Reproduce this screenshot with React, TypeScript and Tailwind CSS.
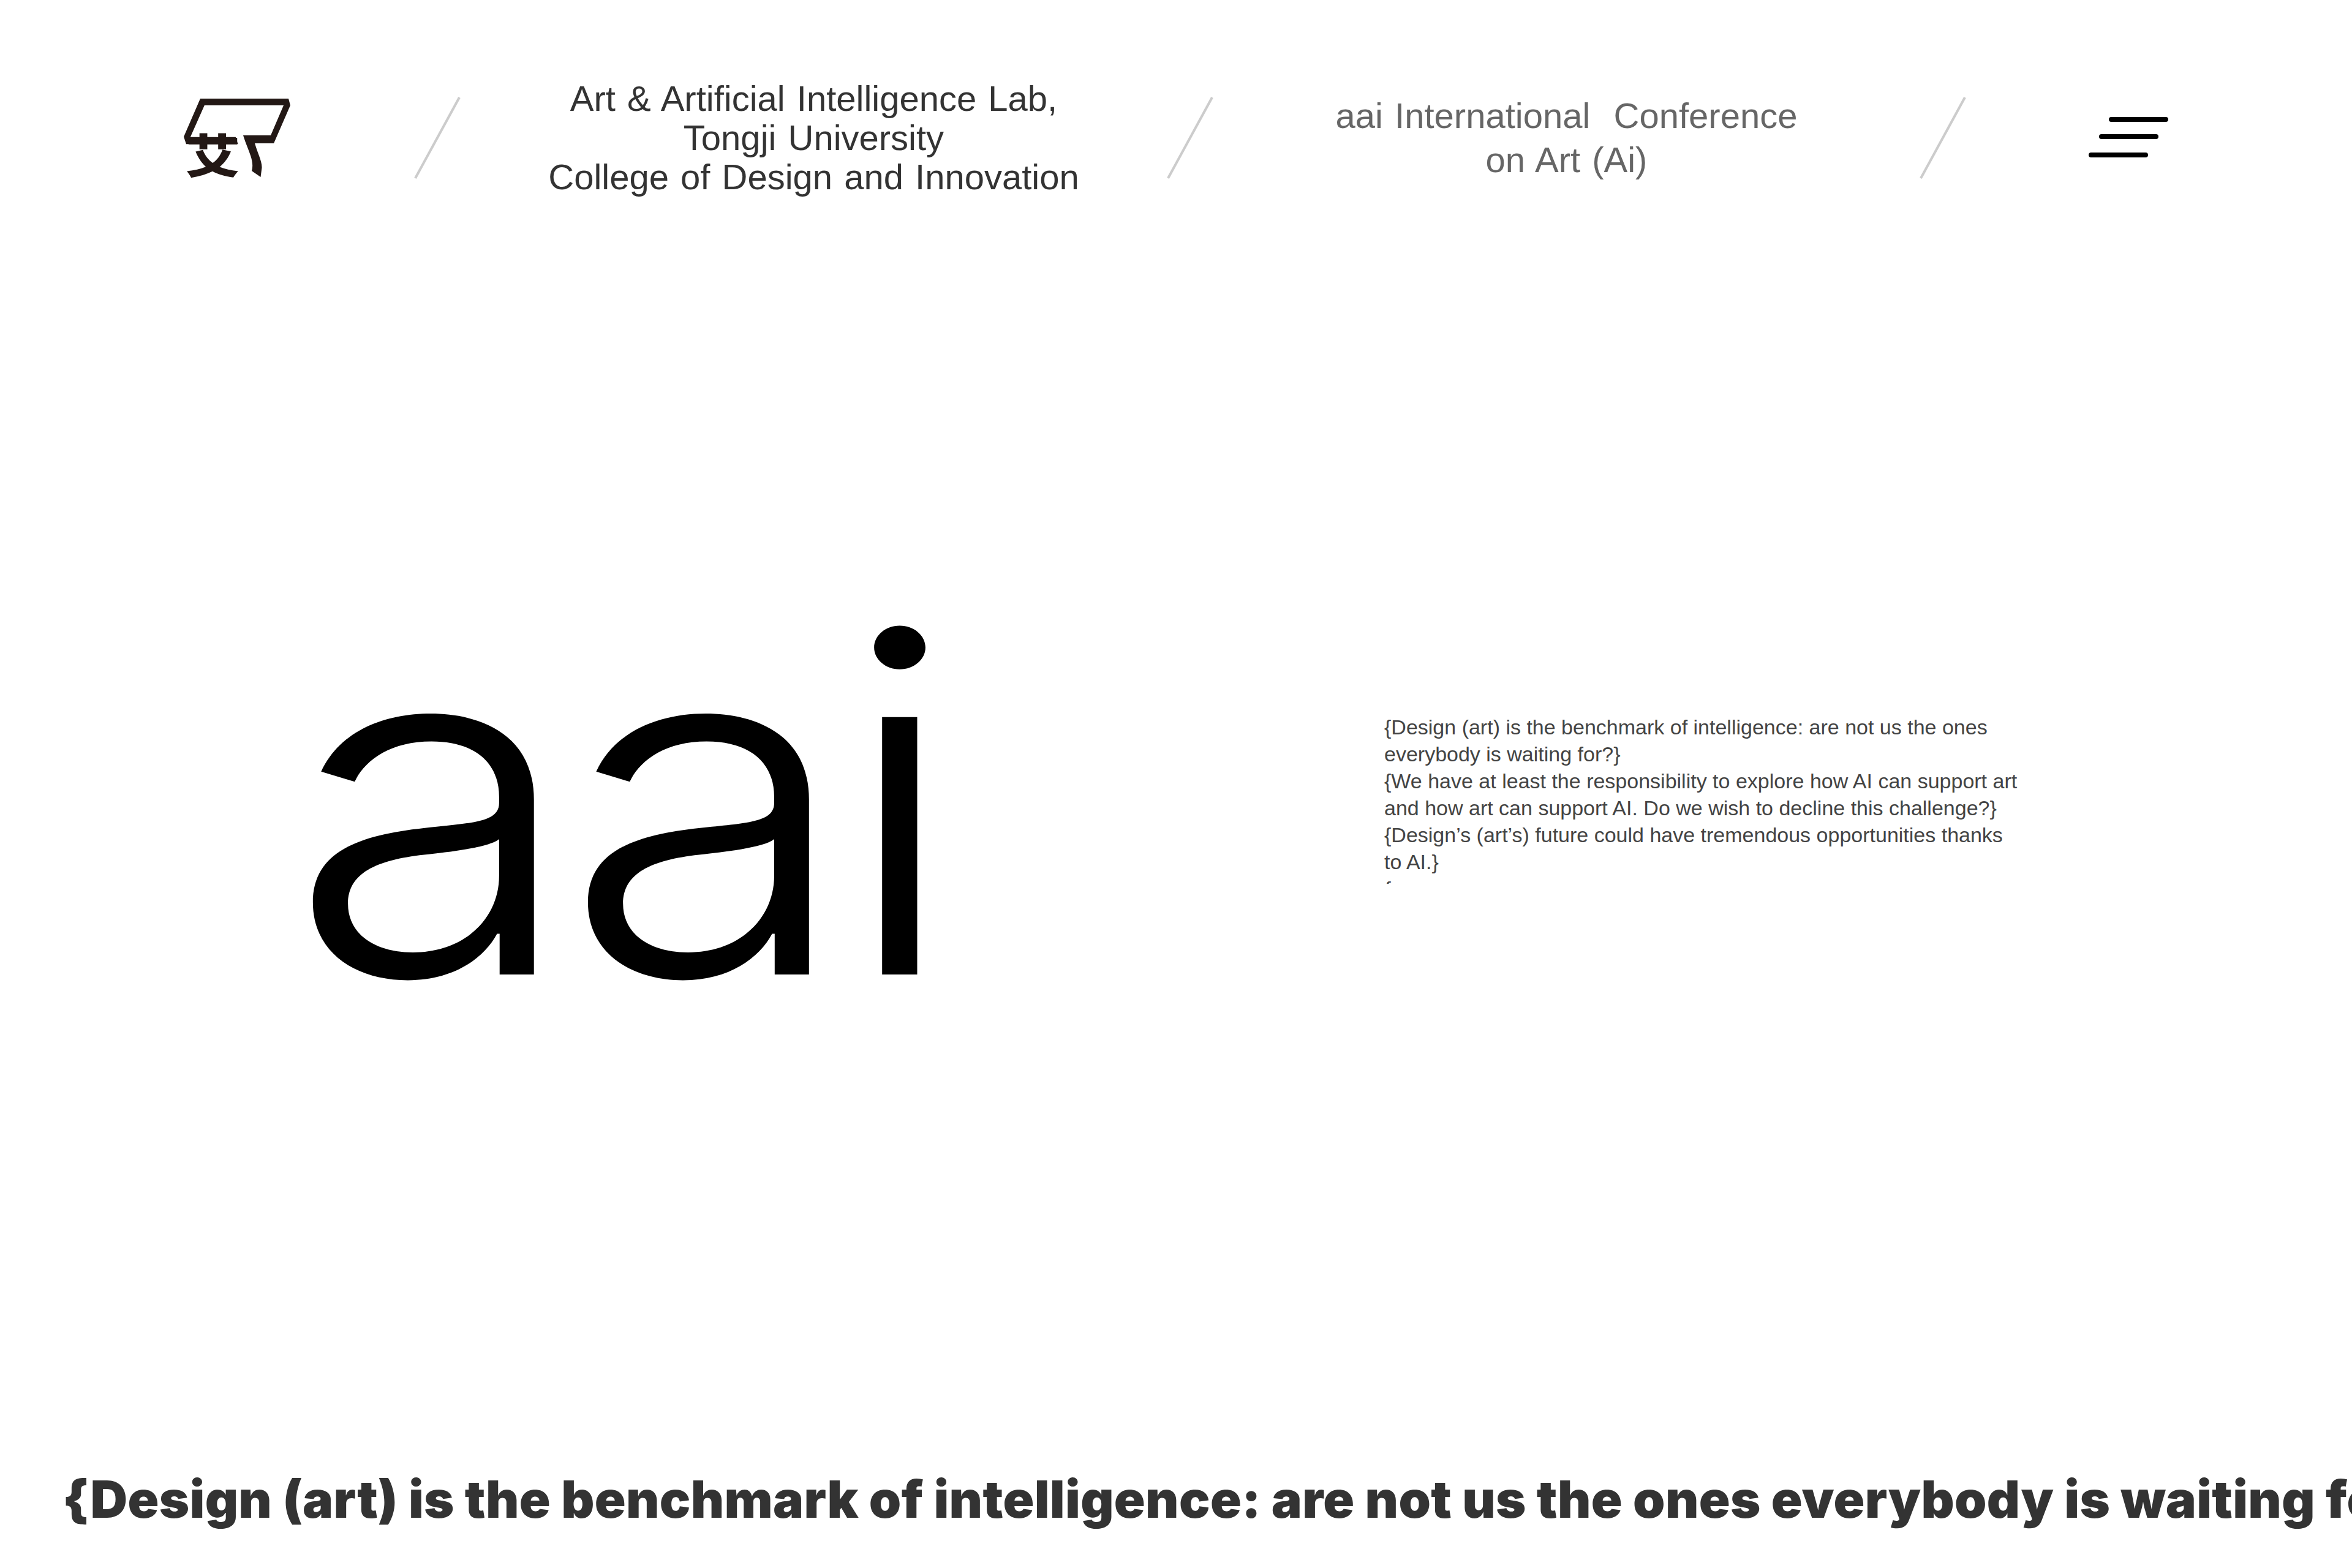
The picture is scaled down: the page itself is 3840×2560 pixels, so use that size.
const tagline = [
  "{Design (art) is the benchmark of intelligence: are not us the ones everybody is waiting for?}",
  "{We have at least the responsibility to explore how AI can support art and how art can support AI. Do we wish to decline this challenge?}",
  "{Design’s (art’s) future could have tremendous opportunities thanks to AI.}",
  "{",
];

function Logo() {
  return (
    <svg width="180" height="132" viewBox="0 0 180 132" className="block">
      <path
        d="M30 2H174L177 13L150 75H119C124 92 131 105 130.5 115L128.5 130L114 120C119 103 107 85 100 62H145L166 13H36.8L13.8 64.7H87.7L91.5 76.3H7L3 64.3Z"
        fill="#231815"
      />
      <text
        transform="translate(6 124) scale(1.17 1)"
        fill="#231815"
        fontSize="76"
        fontWeight="900"
        fontFamily="'Noto Sans CJK SC', sans-serif"
      >
        艾
      </text>
    </svg>
  );
}

function Slash() {
  return (
    <svg width="76" height="134" viewBox="0 0 76 134" className="block shrink-0">
      <line x1="74" y1="1" x2="2" y2="133" stroke="#cccccc" strokeWidth="4" />
    </svg>
  );
}

function MenuIcon() {
  return (
    <svg width="130" height="68" viewBox="0 0 130 68" className="block">
      <g stroke="#000000" strokeWidth="8" strokeLinecap="round">
        <line x1="37" y1="4" x2="126" y2="4" />
        <line x1="21" y1="32" x2="110" y2="32" />
        <line x1="4" y1="62" x2="93" y2="62" />
      </g>
    </svg>
  );
}

export default function App() {
  return (
    <div className="flex h-[2560px] w-[3840px] flex-col overflow-hidden bg-white font-['Liberation_Sans',sans-serif]">
      <header className="flex items-center pl-[98px] pt-[129px]">
        <div className="flex w-[578px] justify-center">
          <Logo />
        </div>
        <Slash />
        <div className="w-[1153px] text-center text-[58px] font-normal leading-[64px] text-[#333333] [word-spacing:3px]">
          <p>Art &amp; Artificial Intelligence Lab,</p>
          <p>Tongji University</p>
          <p>College of Design and Innovation</p>
        </div>
        <Slash />
        <div className="w-[1153px] text-center text-[58px] font-normal leading-[72px] text-[#666666] [word-spacing:3px]">
          <p>aai International&nbsp; Conference</p>
          <p>on Art (Ai)</p>
        </div>
        <Slash />
        <div className="flex w-[529px] justify-center">
          <MenuIcon />
        </div>
      </header>

      <main className="flex flex-1 items-start pt-[540px]">
        <h1 className="ml-[470px] w-[1790px] origin-left scale-x-[1.12] font-['Inter',sans-serif] text-[770px] font-[340] leading-[900px] tracking-[-22px] text-black">
          aai
        </h1>
        <div className="mt-[304px] h-[278px] w-[1040px] overflow-hidden text-[34px] font-normal leading-[44px] text-[#444444]">
          {tagline.map((line) => (
            <p key={line}>{line}</p>
          ))}
        </div>
      </main>

      <footer className="overflow-hidden whitespace-nowrap pb-[57px] pl-[102px] font-['Inter',sans-serif] text-[84px] font-black leading-[110px] tracking-[0.3px] text-[#333333]">
        {tagline.slice(0, 3).join(" ")}
      </footer>
    </div>
  );
}
